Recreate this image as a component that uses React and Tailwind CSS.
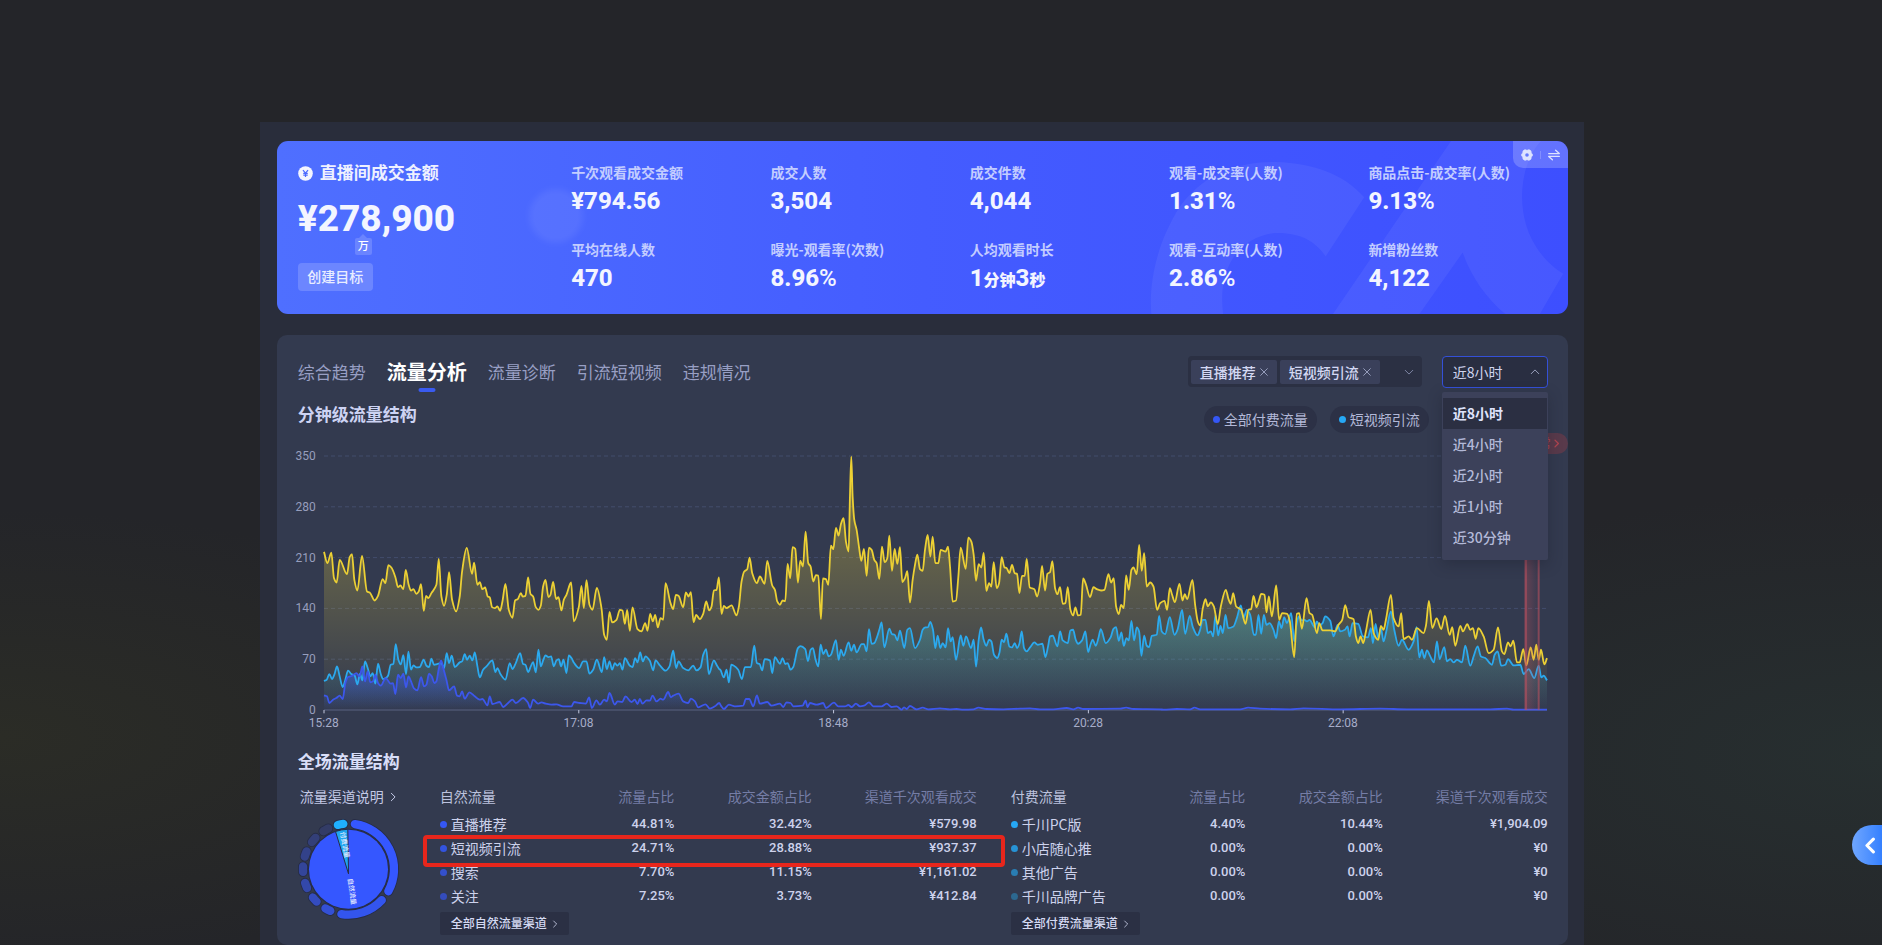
import React from 'react';

/* ---------- chart data: points per stretch of the time axis ---------- */

const STRETCHES = [
  { dx: -193, base: 511 },
  { dx: 1187, base: 841 },
  { dx: 2447, base: 511 },
];
const CHART_W = 3667;
const CHART_H = 763;

const YELLOW = [
  '193,36 203,70 215,38 223,115 231,128 240,60 262,103 270,52 277,43 284,120 293,152 307,48 322,155 330,158 345,182 355,168 369,118 377,130 386,76 395,83 407,112 415,142 422,137 431,148 438,90 447,135 454,152 461,148 470,162 477,155 484,133 492,213 499,168 506,175 515,160 530,135 537,57 545,170 553,198 561,165 568,97 577,180 589,215 600,170 607,95 621,24 637,102 643,68 653,135 660,127 668,148 676,143 684,170 690,173 697,202 705,205 713,200 721,213 728,185 737,132 747,210 758,234 766,182 774,178 783,160 789,170 797,168 805,113 812,162 820,170 828,202 836,210 843,198 850,140 857,120 866,172 872,165 880,126 889,178 896,172 905,212 912,180 920,165 934,128 942,245 957,202 965,138 972,205 980,121 989,195 998,210 1011,144 1025,205 1033,285 1041,300 1049,216 1057,248 1070,240 1080,210 1088,212 1095,252 1102,210 1110,273 1118,203 1133,268 1145,275 1156,250 1163,273 1171,222 1179,245 1186,225 1194,263 1202,235 1210,240 1217,130 1232,190 1240,208 1248,165 1256,168 1270,202 1278,158 1286,170 1293,157 1301,247 1309,225 1320,238 1330,222 1339,185 1348,212 1355,200 1362,152 1370,150 1377,113',
  '5,552 12,528 20,535 35,527 50,557 57,530 65,455 73,425 82,418 89,383 97,430 111,460 120,440 134,462 142,393 157,467 165,480 172,515 180,525 188,512 196,514 203,402 211,445 218,352 226,357 234,458 241,392 249,410 257,305 265,400 272,410 280,455 288,436 295,437 303,568 309,446 318,448 325,465 333,347 340,358 348,294 356,317 363,282 371,265 378,335 386,365 390,200 394,80 398,200 403,270 410,300 417,350 424,393 432,357 440,438 447,353 455,360 463,390 470,400 478,447 486,350 494,397 502,385 508,317 516,423 524,357 532,402 540,352 547,457 555,445 562,424 570,518 578,450 585,405 592,374 600,418 608,423 615,360 623,315 631,380 638,320 646,400 655,400 662,360 677,365 684,350 690,410 698,515 708,512 715,440 722,353 737,417 745,323 754,335 761,375 768,453 776,403 784,413 791,369 799,483 807,460 814,470 821,397 830,475 837,460 845,382 853,412 860,415 868,430 876,405 884,430 891,432 898,490 906,438 914,438 920,387 929,473 943,478 951,500 960,460 966,408 975,482 982,432 990,427 997,394 1005,475 1012,493 1020,472 1028,522 1036,520 1043,472 1051,540 1059,557 1066,533 1074,557 1082,555 1089,446 1097,462 1110,502 1120,472 1130,478 1143,482 1153,480 1165,433 1173,458 1181,445 1188,530 1196,553 1203,525 1211,535 1218,437 1226,480 1234,420 1240,413 1250,433 1257,345 1265,423 1272,370 1280,470 1290,458 1300,470 1311,540 1320,520',
  '73,183 81,210 89,145 96,165 104,187 118,132 127,182 134,163 141,178 157,120 165,195 173,245 180,257 188,205 196,178 203,200 212,188 221,200 233,253 242,200 257,150 265,178 272,192 279,160 288,200 303,210 316,252 325,210 333,208 340,168 349,202 357,180 363,162 373,165 379,218 386,170 395,230 408,137 417,240 426,220 441,222 449,245 462,352 470,222 477,220 485,267 499,175 508,220 516,225 530,280 537,250 547,272 570,272 585,275 595,255 606,240 615,196 625,232 640,238 647,290 654,310 661,290 669,310 677,275 691,210 700,280 714,300 722,258 730,270 737,240 752,165 760,235 775,260 783,220 790,298 805,290 815,300 830,265 850,280 857,258 866,183 876,265 889,236 903,268 914,228 928,285 936,262 945,318 960,258 968,275 981,253 990,270 998,265 1006,297 1014,265 1030,290 1045,340 1060,330 1073,263 1085,335 1092,343 1103,308 1111,320 1119,303 1130,368 1138,368 1149,328 1158,377 1171,323 1180,360 1188,315 1195,360 1202,330 1212,374 1220,355',
];

const CYAN = [
  '193,424 201,420 209,403 217,418 224,405 232,380 240,410 249,442 257,420 265,393 275,403 285,408 293,434 301,402 308,422 316,365 324,385 332,410 339,400 347,432 355,372 363,402 370,418 378,415 385,408 393,375 401,373 408,313 416,360 423,374 431,346 439,403 446,336 454,390 461,377 470,383 480,382 492,360 500,378 508,382 515,357 523,375 532,373 545,370 553,385 561,340 568,370 576,348 585,382 600,368 607,365 615,343 622,360 630,348 638,362 645,338 653,380 660,413 670,390 680,380 698,362 707,397 713,385 722,403 737,420 750,370 758,388 768,370 781,340 790,373 797,375 805,397 813,380 820,367 828,398 836,330 843,380 850,362 857,347 866,352 874,350 882,380 890,362 897,358 904,380 911,360 920,400 927,347 935,355 943,370 958,385 970,365 980,365 989,402 1000,390 1011,360 1026,397 1033,352 1041,388 1049,365 1057,390 1065,370 1073,378 1080,370 1088,390 1095,355 1110,378 1118,382 1126,355 1133,368 1141,338 1149,365 1157,350 1170,363 1180,392 1187,362 1200,377 1217,393 1229,380 1240,333 1249,385 1256,365 1270,385 1285,392 1300,378 1310,392 1322,383 1330,345 1339,328 1347,403 1362,362 1370,375 1378,388',
  '1,720 12,743 20,720 27,758 34,705 42,708 55,720 66,748 75,712 93,712 103,648 111,700 119,703 127,722 134,688 150,692 157,730 165,682 180,702 188,685 196,703 203,700 212,720 220,712 234,655 242,649 256,658 264,694 272,660 279,655 287,690 295,710 302,645 310,673 318,660 326,680 333,675 348,631 356,690 363,660 371,678 386,638 394,663 402,645 410,668 425,643 432,643 440,665 447,598 455,642 463,640 470,625 478,600 485,578 493,653 508,597 516,613 524,615 532,632 540,603 553,655 562,600 570,595 585,655 600,630 608,600 616,593 624,592 631,576 639,600 646,655 653,618 661,655 668,640 677,653 684,595 692,635 698,622 708,690 722,617 730,648 738,620 753,655 761,630 768,711 776,630 783,593 791,630 799,648 807,630 814,635 822,675 832,685 838,670 845,630 852,637 859,612 868,650 876,653 884,640 891,655 898,642 905,605 912,655 920,665 930,653 943,638 953,645 967,642 976,682 984,650 990,620 998,618 1012,650 1020,605 1028,632 1043,640 1051,602 1059,600 1067,630 1074,642 1086,632 1096,605 1104,667 1112,642 1118,630 1127,648 1135,625 1142,598 1157,640 1172,622 1180,597 1188,592 1196,633 1204,608 1211,648 1219,625 1226,632 1234,573 1242,632 1250,593 1257,605 1264,678 1272,618 1280,648 1287,652 1295,618 1310,615 1317,558',
  '65,275 75,283 89,232 103,285 112,270 126,210 135,282 149,228 158,262 172,287 180,270 187,240 196,240 203,280 212,275 219,290 226,225 234,287 241,258 248,280 256,225 264,265 280,260 290,235 302,197 310,235 320,210 330,225 341,285 347,285 355,225 363,282 371,225 379,255 388,250 400,270 408,295 416,245 424,265 432,232 440,250 453,220 462,305 468,260 476,230 485,242 493,240 500,245 508,240 523,262 530,245 538,258 547,250 555,230 570,243 580,290 592,255 600,275 614,270 622,260 628,290 637,250 654,252 668,290 683,293 692,265 698,310 706,252 714,295 722,265 730,305 738,275 752,215 762,270 775,318 785,300 805,330 820,305 829,262 837,353 845,330 852,355 860,332 870,350 881,368 890,305 898,358 912,322 920,365 930,358 940,368 950,360 965,368 975,318 990,378 1000,350 1012,320 1022,350 1035,355 1055,375 1063,345 1072,335 1083,378 1095,375 1103,358 1120,377 1140,375 1150,403 1165,388 1182,415 1195,378 1203,413 1210,408 1220,422',
];

const BLUE = [
  '193,467 202,470 209,490 220,480 230,475 240,468 249,478 257,430 265,412 278,408 290,400 300,410 308,380 316,425 324,395 332,428 340,425 347,405 355,430 363,438 378,415 393,432 400,430 407,463 415,405 423,415 431,402 439,443 446,410 454,425 462,445 473,452 484,412 493,440 500,435 508,402 516,410 524,430 530,425 537,388 544,362 552,390 560,420 568,452 583,440 592,468 600,470 607,455 615,477 629,458 645,470 660,480 668,478 683,497 690,470 698,493 720,487 730,502 745,490 758,480 768,490 790,475 805,490 811,505 820,480 835,492 845,488 858,492 875,495 890,494 910,500 935,500 943,487 960,490 978,492 988,473 996,505 1010,482 1020,495 1033,480 1041,485 1049,460 1065,495 1073,485 1087,487 1097,470 1115,487 1125,480 1133,493 1140,478 1148,492 1160,482 1170,483 1178,468 1190,485 1202,477 1210,480 1225,457 1233,473 1240,468 1256,462 1270,485 1285,490 1293,477 1305,485 1315,503 1337,494 1350,507 1365,500 1378,490',
  '3,828 12,838 27,825 45,830 70,828 78,808 88,808 100,830 111,797 120,822 142,817 155,828 180,822 190,832 200,818 212,820 220,830 248,828 257,813 263,832 270,820 290,825 310,820 318,835 342,819 355,830 375,830 385,826 395,832 408,822 420,830 432,828 447,818 460,830 485,830 500,822 515,832 530,830 545,840 552,833 560,838 570,829 590,839 608,834 625,839 660,836 690,839 710,838 730,840 760,839 775,834 800,838 850,839 900,837 930,836 960,839 1000,839 1040,835 1060,839 1074,834 1090,838 1200,837 1218,834 1240,838 1320,839',
  '70,510 110,508 150,509 163,504 180,509 300,509 324,504 360,507 450,509 490,506 600,509 720,507 800,509 1050,509 1100,507 1120,510 1220,510',
];

function toPoints(series) {
  return series.flatMap((text, i) => {
    const { dx, base } = STRETCHES[i];
    return text.split(' ').map((pair) => {
      const [x, y] = pair.split(',').map(Number);
      return [x + dx, CHART_H - (base - y)];
    });
  });
}

/* Monotone cubic curve through the points */
function smoothPath(p) {
  const n = p.length;
  const slope = [];
  for (let i = 0; i < n - 1; i++) slope.push((p[i + 1][1] - p[i][1]) / (p[i + 1][0] - p[i][0]));
  const m = p.map((_, i) => {
    if (i === 0) return slope[0];
    if (i === n - 1) return slope[n - 2];
    const a = slope[i - 1];
    const b = slope[i];
    return a * b <= 0 ? 0 : (2 * a * b) / (a + b);
  });
  let d = `M${p[0][0]} ${p[0][1]}`;
  for (let i = 0; i < n - 1; i++) {
    const h = (p[i + 1][0] - p[i][0]) / 3;
    const c1 = (p[i][1] + m[i] * h).toFixed(1);
    const c2 = (p[i + 1][1] - m[i + 1] * h).toFixed(1);
    d += `C${(p[i][0] + h).toFixed(1)} ${c1} ${(p[i + 1][0] - h).toFixed(1)} ${c2} ${p[i + 1][0]} ${p[i + 1][1]}`;
  }
  return d;
}

const SERIES = [
  { line: smoothPath(toPoints(CYAN)), color: '#2ba9ee', fill: 'url(#fillCyan)' },
  { line: smoothPath(toPoints(YELLOW)), color: '#ecd034', fill: 'url(#fillYellow)' },
  { line: smoothPath(toPoints(BLUE)), color: '#3c57ec', fill: 'url(#fillBlue)' },
];

const Y_TICKS = [350, 280, 210, 140, 70, 0];
const X_TICKS = ['15:28', '17:08', '18:48', '20:28', '22:08'];

function FlowChart() {
  return (
    <div className="mt-[23px] flex">
      <div className="-my-2 flex w-[18px] shrink-0 flex-col justify-between text-right text-xs leading-4 text-[#979ebd]">
        {Y_TICKS.map((t) => (
          <span key={t} className="-ml-1">{t}</span>
        ))}
      </div>
      <div className="relative mr-px ml-2 h-[254px] min-w-0 flex-1">
        <svg className="block h-full w-full overflow-visible" viewBox={`0 0 ${CHART_W} ${CHART_H}`} preserveAspectRatio="none" role="img" aria-label="分钟级流量结构">
          <defs>
            <linearGradient id="fillYellow" x1="0" y1="0" x2="0" y2="1">
              <stop offset="0" stopColor="#f5d93a" stopOpacity="0.4" />
              <stop offset="1" stopColor="#f5d93a" stopOpacity="0" />
            </linearGradient>
            <linearGradient id="fillCyan" x1="0" y1="0" x2="0" y2="1">
              <stop offset="0" stopColor="#2ab0d8" stopOpacity="0.42" />
              <stop offset="1" stopColor="#2ab0d8" stopOpacity="0" />
            </linearGradient>
            <linearGradient id="fillBlue" x1="0" y1="0" x2="0" y2="1">
              <stop offset="0" stopColor="#3a5bf5" stopOpacity="0.6" />
              <stop offset="1" stopColor="#3a5bf5" stopOpacity="0" />
            </linearGradient>
            <linearGradient id="fillRed" x1="0" y1="0" x2="1" y2="0">
              <stop offset="0" stopColor="#c8525e" stopOpacity="0.35" />
              <stop offset="1" stopColor="#c8525e" stopOpacity="0" />
            </linearGradient>
          </defs>
          {[0, 1, 2, 3, 4].map((i) => (
            <line key={i} x1="0" x2={CHART_W} y1={(i * CHART_H) / 5} y2={(i * CHART_H) / 5} stroke="#434d6d" strokeWidth="1" strokeDasharray="4 3" vectorEffect="non-scaling-stroke" />
          ))}
          <line x1="0" x2={CHART_W} y1={CHART_H} y2={CHART_H} stroke="#5a6282" strokeWidth="1" vectorEffect="non-scaling-stroke" />
          {X_TICKS.map((t, i) => (
            <line key={t} x1={(i * CHART_W) / 4.8} x2={(i * CHART_W) / 4.8} y1={CHART_H} y2={CHART_H + 10} stroke="#c3c8de" strokeWidth="1" vectorEffect="non-scaling-stroke" />
          ))}
          {SERIES.map((s) => (
            <path key={s.fill} d={`${s.line}L${CHART_W} ${CHART_H}L0 ${CHART_H}Z`} fill={s.fill} />
          ))}
          {SERIES.map((s) => (
            <path key={s.color} d={s.line} fill="none" stroke={s.color} strokeWidth="1.8" strokeLinejoin="round" vectorEffect="non-scaling-stroke" />
          ))}
          <rect x="3600" y="0" width="46" height={CHART_H} fill="url(#fillRed)" />
          <rect x="3600" y="0" width="7" height={CHART_H} fill="#b9505e" fillOpacity="0.55" />
          <rect x="3639" y="0" width="6" height={CHART_H} fill="#b9505e" fillOpacity="0.6" />
        </svg>
        {X_TICKS.map((t, i) => (
          <span key={t} className="absolute top-full mt-[5px] -translate-x-1/2 text-xs leading-4 text-[#a7adc9]" style={{ left: `${(i * 100) / 4.8}%` }}>
            {t}
          </span>
        ))}
      </div>
    </div>
  );
}

/* ---------- small icons ---------- */

function Chevron({ dir = 'right', className = '', width = 1.2 }) {
  const d = { right: 'M4 1.5 8.5 6 4 10.5', left: 'M8 1.5 3.5 6 8 10.5', down: 'M1.5 4 6 8.5 10.5 4', up: 'M1.5 8 6 3.5 10.5 8' }[dir];
  return (
    <svg viewBox="0 0 12 12" className={className} fill="none" stroke="currentColor" strokeWidth={width} strokeLinecap="round" strokeLinejoin="round" aria-hidden="true">
      <path d={d} />
    </svg>
  );
}

function Cross() {
  return (
    <svg viewBox="0 0 10 10" className="size-2" stroke="currentColor" strokeWidth="1.2" aria-hidden="true">
      <path d="M0.5 0.5 9.5 9.5M9.5 0.5 0.5 9.5" />
    </svg>
  );
}

/* ---------- summary card ---------- */

const STATS = [
  ['千次观看成交金额', '¥794.56'],
  ['成交人数', '3,504'],
  ['成交件数', '4,044'],
  ['观看-成交率(人数)', '1.31', '%'],
  ['商品点击-成交率(人数)', '9.13', '%'],
  ['平均在线人数', '470'],
  ['曝光-观看率(次数)', '8.96', '%'],
  ['人均观看时长', null],
  ['观看-互动率(人数)', '2.86', '%'],
  ['新增粉丝数', '4,122'],
];

function Stat({ item }) {
  const [label, value, suffix] = item;
  return (
    <div>
      <dt className="font-['Noto_Sans_CJK_SC',sans-serif] text-sm leading-5 font-bold whitespace-nowrap text-[#c3cdff]">{label}</dt>
      <dd className="mt-[3px] h-8 text-2xl leading-8 font-extrabold whitespace-nowrap text-[#f3f5ff]">
        {value === null ? (
          <>
            1<span className="text-base">分钟</span>3<span className="text-base">秒</span>
          </>
        ) : (
          <>
            {value}
            {suffix && <span className="font-medium">{suffix}</span>}
          </>
        )}
      </dd>
    </div>
  );
}

function SummaryCard() {
  return (
    <section className="relative grid h-[173px] grid-cols-[273fr_995fr] overflow-hidden rounded-[11px] bg-linear-to-r from-[#4f6fff] via-[#445cff] to-[#3d4fff] pl-[21px]">
      <svg className="absolute top-0 right-0 h-full" viewBox="0 93 1315 520" aria-hidden="true">
        <g fill="#ffffff" fillOpacity="0.055">
          <path d="M64 613C56 520 80 400 150 290C230 180 340 155 440 156C550 160 640 190 704 262L588 440C550 385 500 368 430 370C330 385 262 470 280 613Z" />
          <path d="M610 613L965 93H1235C1165 170 1160 320 1220 410C1245 450 1275 475 1302 492L1232 613H1128C1070 565 1025 500 1000 428L870 613Z" />
        </g>
      </svg>
      <span className="absolute top-[48px] left-[252px] size-[54px] rounded-full bg-white/7 blur-[3px]" />

      <div className="relative pt-[21px]">
        <h2 className="flex items-center gap-[7px] text-[17px] leading-[22px] font-bold text-[#eef1ff]">
          <svg viewBox="0 0 16 16" className="size-[15px]" aria-hidden="true">
            <circle cx="8" cy="8" r="7.8" fill="#f3f5ff" />
            <path d="M5.3 4.4 8 7.6 10.7 4.4M8 7.6V11.8M5.6 7.9H10.4M5.6 9.8H10.4" stroke="#4c6bff" strokeWidth="1.3" fill="none" />
          </svg>
          直播间成交金额
        </h2>
        <p className="mt-[13px] text-[37px] leading-[44px] font-extrabold text-[#f3f5ff]">¥278,900</p>
        <span className="absolute top-[97px] left-[57px] flex size-[17px] items-center justify-center rounded-xs bg-[#6a84ff] text-[11px] leading-none font-medium text-white before:absolute before:-top-1 before:left-1/2 before:-translate-x-1/2 before:border-x-4 before:border-b-4 before:border-x-transparent before:border-b-[#6a84ff]">
          万
        </span>
        <button type="button" className="mt-[22px] block h-7 w-[75px] rounded bg-[#6c86ff] text-sm leading-5 font-medium text-[#e9edff]">
          创建目标
        </button>
      </div>

      <dl className="relative grid grid-cols-5 content-start gap-y-[22px] pt-[21px]">
        {STATS.map((s) => (
          <Stat key={s[0]} item={s} />
        ))}
      </dl>

      <div className="absolute top-0 right-0 flex h-[27px] w-[55px] items-center justify-between rounded-bl-[10px] bg-white/20 px-2 text-[#dde3ff]">
        <button type="button" aria-label="设置" className="block size-3">
          <svg viewBox="0 0 12 12" className="size-3" aria-hidden="true">
            <path d="M4 .6 6 1.2 8 .6 10 1.8 10.4 3.9 11.9 6 10.4 8.1 10 10.2 8 11.4 6 10.8 4 11.4 2 10.2 1.6 8.1.1 6 1.6 3.9 2 1.8Z" fill="currentColor" stroke="currentColor" strokeWidth=".5" strokeLinejoin="round" />
            <circle cx="6" cy="6" r="1.8" fill="#6378ff" />
          </svg>
        </button>
        <span className="h-2 w-px bg-white/20" />
        <button type="button" aria-label="切换" className="block size-3">
          <svg viewBox="0 0 12 12" className="size-3" fill="none" stroke="currentColor" strokeWidth="1.3" strokeLinecap="round" strokeLinejoin="round" aria-hidden="true">
            <path d="M.7 4.6H11.3L7.6 1.3M11.3 7.4H.7L4.4 10.7" />
          </svg>
        </button>
      </div>
    </section>
  );
}

/* ---------- toolbar ---------- */

const TABS = ['综合趋势', '流量分析', '流量诊断', '引流短视频', '违规情况'];
const RANGES = ['近8小时', '近4小时', '近2小时', '近1小时', '近30分钟'];

function Toolbar() {
  return (
    <div className="flex items-start justify-between">
      <nav className="flex h-[34px] items-center gap-[21px]">
        {TABS.map((t, i) =>
          i === 1 ? (
            <button key={t} type="button" className="relative text-xl leading-7 font-bold text-white after:absolute after:top-[29px] after:left-1/2 after:h-1 after:w-[17px] after:-translate-x-1/2 after:rounded-full after:bg-[#3a5bf0]">
              {t}
            </button>
          ) : (
            <button key={t} type="button" className="text-[17px] leading-7 text-[#989fc4]">
              {t}
            </button>
          ),
        )}
      </nav>
      <div className="flex items-start gap-5 font-['Noto_Sans_CJK_SC',sans-serif]">
        <div className="flex h-[31px] w-[234px] items-center gap-[3px] rounded bg-[#2b3043] pl-[3px] text-sm leading-5 text-[#d3d8f3]">
          {['直播推荐', '短视频引流'].map((t) => (
            <span key={t} className="flex h-6 items-center gap-1 rounded-xs bg-[#3a405a] px-[9px] font-medium">
              {t}
              <button type="button" aria-label={`移除${t}`} className="text-[#9aa1c0]">
                <Cross />
              </button>
            </span>
          ))}
          <Chevron dir="down" className="mr-2 ml-auto size-[10px] text-[#7e85a3]" />
        </div>
        <div className="relative w-[106px]">
          <select aria-label="时间范围" defaultValue="近8小时" className="block h-8 w-full appearance-none rounded border border-[#3450d8] bg-[#292e41] pl-[10px] text-sm text-[#cfd4ee] outline-none">
            {RANGES.map((r) => (
              <option key={r}>{r}</option>
            ))}
          </select>
          <Chevron dir="up" className="pointer-events-none absolute top-[11px] right-2 size-[10px] text-[#9aa1bd]" />
          <ul role="listbox" aria-label="时间范围选项" className="absolute top-9 left-0 z-20 w-full rounded-xs bg-[#3c415a] pt-[6px] pb-[7px] text-sm shadow-[0_4px_14px_rgba(25,29,43,0.35)]">
            {RANGES.map((r, i) => (
              <li
                key={r}
                role="option"
                aria-selected={i === 0}
                className={i === 0 ? 'mx-px h-[31px] bg-[#2b2f42] pl-[10px] leading-[31px] font-bold text-[#dfe3fb]' : 'mx-px h-[31px] pl-[10px] leading-[31px] font-medium text-[#b3b9d8]'}
              >
                {r}
              </li>
            ))}
          </ul>
        </div>
      </div>
    </div>
  );
}

/* ---------- donut ---------- */

const CX = 152;
const CY = 151;

function polar(r, deg) {
  const a = ((deg - 90) * Math.PI) / 180;
  return `${(CX + r * Math.cos(a)).toFixed(1)} ${(CY + r * Math.sin(a)).toFixed(1)}`;
}

const ARCS = [
  [8, 119, '#3557ff'],
  [133, 189, '#3355ee'],
  [203.5, 210.5, '#3450d4'],
  [224.5, 231.5, '#344cbf'],
  [245.5, 252.5, '#3348aa'],
  [266.5, 273.5, '#33459a'],
  [286, 293, '#33428a'],
  [306.5, 313.5, '#333f78'],
  [326.5, 333.5, '#333c66'],
  [346.5, 353.5, '#1fb0ff'],
];

function Donut() {
  return (
    <svg viewBox="0 0 304 304" className="mt-[10px] -ml-[2px] size-[101px]" role="img" aria-label="流量占比">
      {ARCS.map(([a, b, color]) => {
        const d = `M${polar(137, a)}A137 137 0 0 1 ${polar(137, b)}`;
        return (
          <g key={a} fill="none" strokeLinecap="round">
            <path d={d} stroke="#262c46" strokeWidth="30" />
            <path d={d} stroke={color} strokeWidth="25" />
          </g>
        );
      })}
      <circle cx={CX} cy={CY} r="122" fill="#262c46" />
      <circle cx={CX} cy={CY} r="119" fill="#3557ff" />
      <path d={`M${CX} ${CY + 14}L${polar(120, 341)}A120 120 0 0 1 ${polar(120, 359)}Z`} fill="#1fa6f0" stroke="#262c46" strokeWidth="3" />
      <g fill="#e9edff" fontSize="20" fontWeight="500">
        <text transform="translate(127 40) rotate(80)">付费流量</text>
        <text transform="translate(150 180) rotate(82)">自然流量</text>
      </g>
    </svg>
  );
}

/* ---------- tables ---------- */

const NATURAL = [
  ['直播推荐', '44.81%', '32.42%', '¥579.98', 'bg-[#3557f5]'],
  ['短视频引流', '24.71%', '28.88%', '¥937.37', 'bg-[#3354e0]'],
  ['搜索', '7.70%', '11.15%', '¥1,161.02', 'bg-[#3450cc]'],
  ['关注', '7.25%', '3.73%', '¥412.84', 'bg-[#344cbc]'],
];
const PAID = [
  ['千川PC版', '4.40%', '10.44%', '¥1,904.09', 'bg-[#26a8f5]'],
  ['小店随心推', '0.00%', '0.00%', '¥0', 'bg-[#2793d6]'],
  ['其他广告', '0.00%', '0.00%', '¥0', 'bg-[#297db3]'],
  ['千川品牌广告', '0.00%', '0.00%', '¥0', 'bg-[#2c6890]'],
];

function FlowTable({ title, rows, more, marked }) {
  return (
    <div className="min-w-0 flex-1">
      <table className="w-full table-fixed text-sm leading-6 whitespace-nowrap text-[#cdd2ec]">
        <thead>
          <tr className="h-[27px] text-right align-top text-[#757da6]">
            <th className="w-[25%] p-0 text-left font-normal text-[#bcc2de]">{title}</th>
            <th className="w-[18.7%] p-0 text-right font-normal">流量占比</th>
            <th className="w-[25.6%] p-0 text-right font-normal">成交金额占比</th>
            <th className="w-[30.7%] p-0 text-right font-normal">渠道千次观看成交</th>
          </tr>
        </thead>
        <tbody>
          {rows.map(([name, a, b, c, dot], i) => (
            <tr key={name} className="relative h-6">
              <td className="p-0">
                <span className="flex items-center gap-1">
                  <i className={`size-[7px] rounded-full ${dot}`} />
                  <span className="font-['Noto_Sans_CJK_SC',sans-serif]">{name}</span>
                </span>
                {marked === i && <span className="pointer-events-none absolute -top-[1px] -right-[28px] -left-[17px] z-10 h-8 rounded border-4 border-[#e8261c]" />}
              </td>
              <td className="p-0 text-right text-[13px] font-medium">{a}</td>
              <td className="p-0 text-right text-[13px] font-medium">{b}</td>
              <td className="p-0 text-right text-[13px] font-medium">{c}</td>
            </tr>
          ))}
        </tbody>
      </table>
      <button type="button" className="mt-1 flex h-[23px] items-center gap-1 rounded-xs bg-[#2b3044] pr-2.5 pl-[11px] text-xs font-medium text-[#d5daf3]">
        {more}
        <Chevron className="size-2" />
      </button>
    </div>
  );
}

/* ---------- page ---------- */

export default function App() {
  return (
    <div className="relative flex min-h-screen flex-col bg-[#242529] bg-[radial-gradient(ellipse_30%_24%_at_0%_78%,#2b2c26,transparent),radial-gradient(ellipse_34%_28%_at_100%_80%,#272f30,transparent)] pt-[122px] font-['Roboto','Noto_Sans_CJK_SC',sans-serif]">
      <main className="mr-[15.85%] ml-[13.8%] flex flex-1 flex-col bg-[#292d3b] pt-[19px] pr-4 pl-[17px]">
        <SummaryCard />

        <section className="relative mt-[21px] flex-1 rounded-[10px] bg-[#333a4f] pt-[21px] pr-5 pb-[10px] pl-[21px]">
          <Toolbar />

          <div className="mt-[13px] flex items-start justify-between pr-[119px]">
            <h3 className="text-[17px] leading-6 font-bold text-[#cdd3f3]">分钟级流量结构</h3>
            <ul className="flex gap-[13px] pt-[3px] text-sm leading-5 text-[#b3b9d8]">
              <li className="flex h-[27px] items-center gap-1 rounded-full bg-[#2c3146] px-[9px]">
                <i className="size-[7px] rounded-full bg-[#3557f5]" />
                全部付费流量
              </li>
              <li className="flex h-[27px] items-center gap-1 rounded-full bg-[#2c3146] px-[9px]">
                <i className="size-[7px] rounded-full bg-[#26a8f5]" />
                短视频引流
              </li>
            </ul>
          </div>

          <button type="button" className="absolute top-[98px] right-0 flex h-[21px] items-center gap-px rounded-full bg-[#593a4b] pr-[7px] pl-3 text-xs text-[#b04450]">
            异常
            <Chevron className="size-[9px]" width={1.8} />
          </button>

          <FlowChart />

          <h3 className="mt-10 text-[17px] leading-6 font-bold text-[#d9def8]">全场流量结构</h3>

          <div className="mt-[11px] flex">
            <div className="w-[142px] shrink-0 pl-[2px] text-sm">
              <a href="#channels" className="flex items-center gap-1 leading-6 text-[#c3c9e6]">
                流量渠道说明
                <Chevron className="size-[10px]" />
              </a>
              <Donut />
            </div>
            <div className="flex min-w-0 flex-1 gap-[34px]">
              <FlowTable title="自然流量" rows={NATURAL} more="全部自然流量渠道" marked={1} />
              <FlowTable title="付费流量" rows={PAID} more="全部付费流量渠道" />
            </div>
          </div>
        </section>
      </main>

      <button type="button" aria-label="展开" className="fixed top-[825px] right-0 z-30 flex h-10 w-[30px] items-center justify-center rounded-l-full bg-linear-to-r from-[#6fa6ff] to-[#3480ff] pl-[6px] text-white">
        <Chevron dir="left" className="size-[17px]" width={2.2} />
      </button>
    </div>
  );
}
